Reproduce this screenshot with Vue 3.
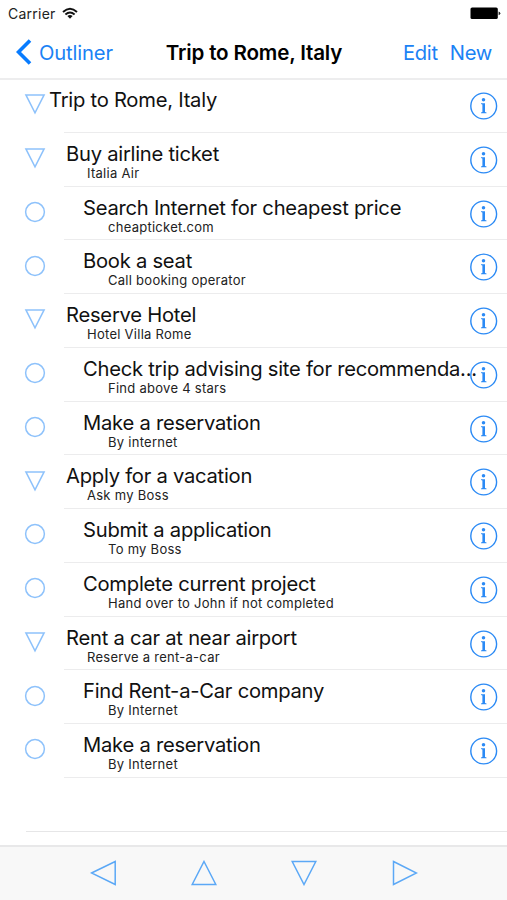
<script setup>
const rows = [
  { title: 'Trip to Rome, Italy', note: '', level: 0, open: true },
  { title: 'Buy airline ticket', note: 'Italia Air', level: 1, open: true },
  { title: 'Search Internet for cheapest price', note: 'cheapticket.com', level: 2 },
  { title: 'Book a seat', note: 'Call booking operator', level: 2 },
  { title: 'Reserve Hotel', note: 'Hotel Villa Rome', level: 1, open: true },
  { title: 'Check trip advising site for recommenda...', note: 'Find above 4 stars', level: 2 },
  { title: 'Make a reservation', note: 'By internet', level: 2 },
  { title: 'Apply for a vacation', note: 'Ask my Boss', level: 1, open: true },
  { title: 'Submit a application', note: 'To my Boss', level: 2 },
  { title: 'Complete current project', note: 'Hand over to John if not completed', level: 2 },
  { title: 'Rent a car at near airport', note: 'Reserve a rent-a-car', level: 1, open: true },
  { title: 'Find Rent-a-Car company', note: 'By Internet', level: 2 },
  { title: 'Make a reservation', note: 'By Internet', level: 2 }
]
const arrows = [
  { name: 'Outdent', points: '1.5,13 25.2,1.5 25.2,24.5' },
  { name: 'Move up', points: '13,1.5 24.8,24.5 1.2,24.5' },
  { name: 'Move down', points: '1.2,1.5 24.8,1.5 13,24.5' },
  { name: 'Indent', points: '1.5,1.5 24.5,13 1.5,24.5' }
]
</script>

<template>
  <div class="screen">
    <header class="top">
      <div class="status">
        <span class="carrier">Carrier</span>
        <svg class="wifi" width="16" height="13" viewBox="0 0 16 13">
          <path d="M1 5Q8-1.6 15 5M3.4 7.5Q8 3.4 12.6 7.5" fill="none" stroke="#111" stroke-width="1.9" />
          <path d="M5.4 9.1Q8 6.9 10.6 9.1L8 11.8Z" fill="#111" />
        </svg>
        <svg class="battery" width="31" height="13" viewBox="0 0 31 13">
          <rect x=".5" y=".5" width="27.3" height="11.6" rx="1.6" fill="#000" />
          <path d="M28.6 4.4Q30.3 4.7 30.3 6.3T28.6 8.2Z" fill="#222" />
        </svg>
      </div>
      <nav class="nav">
        <button class="back">
          <svg width="16" height="26" viewBox="0 0 16 26"><path d="M14 1.5L2.5 13 14 24.5" fill="none" stroke="#087cff" stroke-width="3.6" /></svg>
          <span>Outliner</span>
        </button>
        <h1>Trip to Rome, Italy</h1>
        <div class="actions"><button>Edit</button><button>New</button></div>
      </nav>
    </header>
    <main>
      <div v-for="(row, i) in rows" :key="i" class="row" :class="'level' + row.level">
        <svg class="marker" width="22" height="22" viewBox="0 0 22 22">
          <path v-if="row.open" d="M1.9 1.9H20.1L11 19.8Z" />
          <circle v-else cx="11" cy="11" r="9.4" />
        </svg>
        <div class="content">
          <div class="text">
            <div class="title">{{ row.title }}</div>
            <div class="note">{{ row.note }}</div>
          </div>
          <svg class="info" width="28" height="28" viewBox="0 0 28 28">
            <circle cx="13.7" cy="14" r="12.9" fill="none" stroke="#2b8af5" stroke-width="1.4" />
            <circle cx="13.5" cy="7.8" r="1.75" fill="#2b8af5" />
            <path d="M11 11.2H15V19.9L16.5 20.4V21.2H11V20.4L12.4 19.9V12.4L11 12Z" fill="#2b8af5" />
          </svg>
        </div>
      </div>
      <div class="empty"></div>
    </main>
    <footer class="toolbar">
      <button v-for="a in arrows" :key="a.name" :aria-label="a.name">
        <svg width="26" height="26" viewBox="0 0 26 26"><polygon :points="a.points" /></svg>
      </button>
    </footer>
  </div>
</template>

<style>
body { margin: 0; background: #fff; }
</style>

<style scoped>
.screen { width: 507px; height: 900px; display: flex; flex-direction: column; overflow: hidden; background: #fff; color: #111; font-family: Inter, "Liberation Sans", sans-serif; }
button { border: 0; padding: 0; background: none; font: inherit; color: #1b82f5; letter-spacing: inherit; }
svg { display: block; flex: none; }
.top { box-sizing: border-box; height: 80px; flex: none; border-bottom: 2px solid #ededee; }
.status { height: 26px; display: flex; align-items: center; padding: 1px 6px 0 8px; box-sizing: border-box; }
.carrier { font-size: 14px; letter-spacing: .25px; color: #222; }
.wifi { margin-left: 6px; }
.battery { margin-left: auto; }
.nav { height: 52px; display: grid; grid-template-columns: 1fr auto 1fr; align-items: center; padding: 0 15px 0 16px; font-size: 20.2px; letter-spacing: -.3px; }
.back { display: flex; align-items: center; gap: 7px; letter-spacing: -.15px; }
h1 { margin: 0; font-size: 20.6px; font-weight: 600; letter-spacing: -.18px; color: #000; }
.actions { display: flex; justify-content: flex-end; gap: 12px; }
main { flex: 1; min-height: 0; }
.row { height: 53.75px; display: flex; }
.row:first-child { height: 52.75px; margin-top: 0; }
.row:first-child .marker { margin-top: 13.3px; }
.row:first-child .title { margin-top: 7px; }
.row:first-child .info { margin-top: 12px; }
.marker { margin: 14.3px 0 0 24px; fill: none; stroke: #8ec2fb; stroke-width: 1.5; }
.content { flex: 1; min-width: 0; margin-left: 18px; display: flex; border-bottom: 1.5px solid #ececed; box-sizing: border-box; }
.text { flex: 1; min-width: 0; white-space: nowrap; }
.title { height: 25px; margin-top: 8px; line-height: 25px; font-size: 20.2px; letter-spacing: -.25px; }
.note { line-height: 15px; height: 15px; font-size: 13px; letter-spacing: .27px; color: #222; }
.level0 .title { margin-left: -15px; }
.level1 .title { margin-left: 2px; }
.level2 .title { margin-left: 19px; }
.level1 .note { margin-left: 23px; }
.level2 .note { margin-left: 44px; }
.info { margin: 13px 9px 0 0; }
.empty { height: 53.75px; margin-left: 26px; box-sizing: border-box; border-bottom: 1px solid #e6e6e7; }
.toolbar { height: 55px; flex: none; box-sizing: border-box; border-top: 2px solid #e8e8e9; background: #f8f8f8; display: flex; justify-content: center; gap: 74.8px; padding-left: 1px; }
.toolbar button { height: 52px; display: flex; align-items: center; }
.toolbar polygon { fill: none; stroke: #5ba8f6; stroke-width: 1.5; }
</style>
